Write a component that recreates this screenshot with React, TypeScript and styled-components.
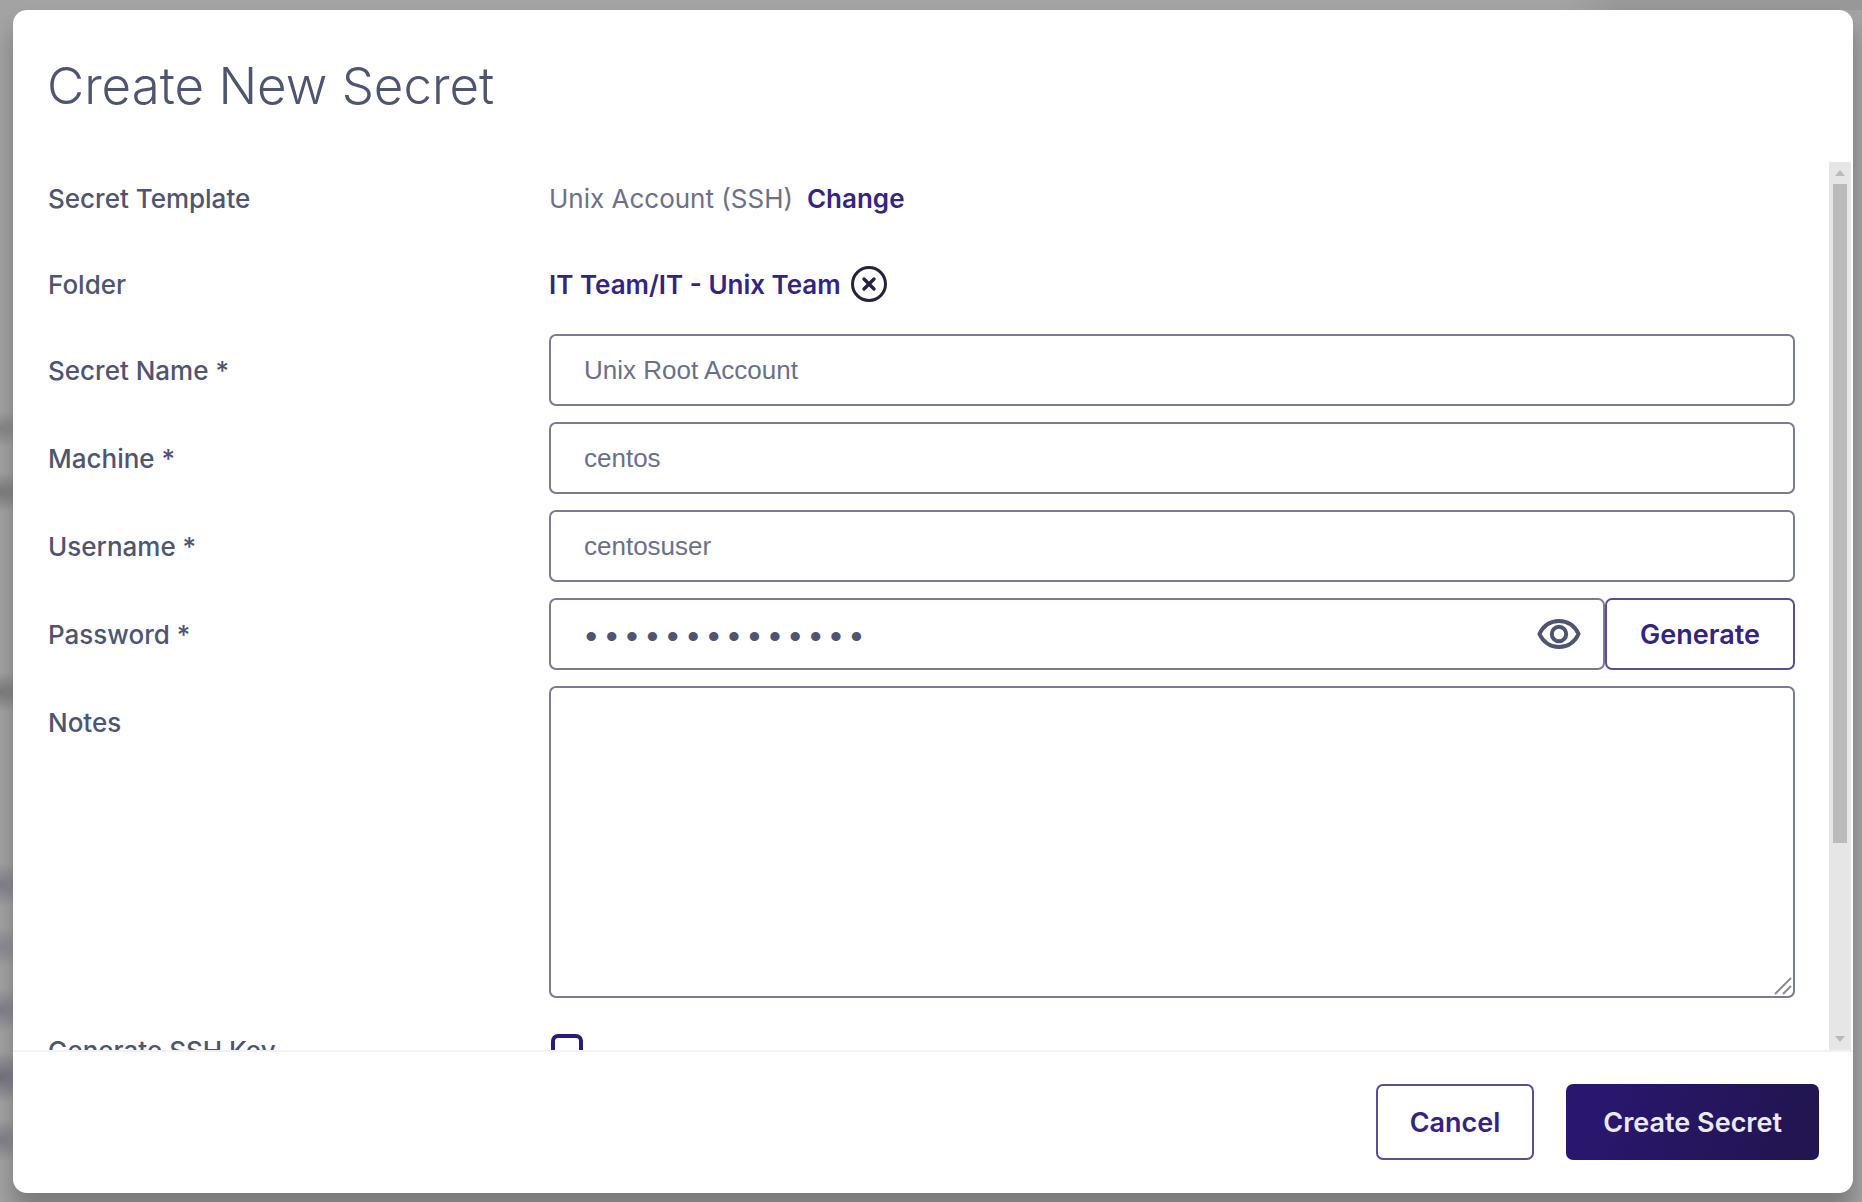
import React, { useCallback, useEffect, useRef, useState } from "react";
import styled, { createGlobalStyle, css } from "styled-components";

const color = {
  text: "#4f5470",
  muted: "#6c7087",
  border: "#7a7c92",
  brand: "#35247f",
  outline: "#5a4d97",
  ink: "#23233a",
};

const GlobalStyle = createGlobalStyle`
  *, *::before, *::after { box-sizing: border-box; }
  body { margin: 0; }
`;

const Backdrop = styled.div`
  display: flex;
  height: 100vh;
  padding: 10px 9px 9px 13px;
  overflow: hidden;
  font-family: Inter, "Liberation Sans", sans-serif;
  color: ${color.text};
  background:
    radial-gradient(ellipse 30px 18px at 0 429px, #7d7d7dcc, transparent),
    radial-gradient(ellipse 30px 20px at 0 492px, #757575dd, transparent),
    radial-gradient(ellipse 30px 20px at 0 692px, #757575dd, transparent),
    radial-gradient(ellipse 30px 22px at 0 885px, #7b7987dd, transparent),
    radial-gradient(ellipse 26px 20px at 0 947px, #83818ecc, transparent),
    radial-gradient(ellipse 30px 22px at 0 1010px, #7b7987dd, transparent),
    radial-gradient(ellipse 32px 26px at 0 1077px, #6e6c7bee, transparent),
    radial-gradient(ellipse 28px 22px at 0 1140px, #7b7987dd, transparent),
    linear-gradient(90deg, transparent 84%, #96989a 87%) 0 0 / 100% 10px no-repeat,
    #a3a3a3;
`;

const Dialog = styled.section`
  flex: 1;
  min-width: 0;
  display: flex;
  flex-direction: column;
  background: #fff;
  border-radius: 14px;
  box-shadow: 0 18px 22px rgba(0, 0, 0, 0.26);
`;

const Header = styled.header`
  padding: 44px 34px;
`;

const Title = styled.h1`
  margin: 0;
  font-size: 51px;
  font-weight: 300;
  line-height: 64px;
`;

const Body = styled.div`
  flex: 1;
  min-height: 0;
  display: flex;
  padding-right: 2px;
`;

const Scroller = styled.div`
  flex: 1;
  min-width: 0;
  overflow-y: auto;
  scrollbar-width: none;
`;

const Form = styled.form`
  display: flex;
  flex-direction: column;
  gap: 16px;
  padding: 0 34px 214px 35px;
`;

const Row = styled.div`
  display: grid;
  grid-template-columns: minmax(160px, 501px) minmax(0, 1fr);
  align-items: start;
`;

const labelText = css`
  padding-top: 4px;
  font-size: 26px;
  font-weight: 500;
  line-height: 66px;
`;

const Label = styled.label`
  ${labelText}
`;

const Caption = styled.span`
  ${labelText}
`;

const Value = styled.div<{ $gap: number }>`
  display: flex;
  align-items: center;
  gap: ${(p) => p.$gap}px;
  height: 70px;
  padding-top: 2px;
  font-size: 26px;
  color: ${color.muted};
`;

const TextLink = styled.a`
  color: ${color.brand};
  font-weight: 600;
  text-decoration: none;
`;

const IconButton = styled.button`
  display: flex;
  padding: 0;
  border: 0;
  background: none;
  color: ${(p) => p.color};
  cursor: pointer;
`;

const fieldBox = css`
  width: 100%;
  border: 2px solid ${color.border};
  border-radius: 7px;
  background: #fff;
  color: ${color.muted};
  font-family: "Liberation Sans", Arial, sans-serif;
  font-size: 26px;
  outline: none;
`;

const Input = styled.input`
  ${fieldBox}
  height: 72px;
  padding: 0 33px;
`;

const PasswordGroup = styled.div`
  display: flex;
`;

const PasswordBox = styled.div`
  ${fieldBox}
  flex: 1;
  min-width: 0;
  display: flex;
  align-items: center;
  height: 72px;
  padding: 0 22px 0 30px;
`;

const PasswordInput = styled.input`
  flex: 1;
  min-width: 0;
  padding: 10px 0 0;
  border: 0;
  outline: none;
  background: none;
  color: ${color.text};
  font-family: "Liberation Mono", monospace;
  font-size: 34px;
`;

const NotesBox = styled.div`
  position: relative;
  display: flex;
`;

const Notes = styled.textarea`
  ${fieldBox}
  height: 312px;
  padding: 18px 32px;
  resize: vertical;

  &::-webkit-resizer {
    display: none;
  }
`;

const Grip = styled.svg`
  position: absolute;
  right: 3px;
  bottom: 3px;
  pointer-events: none;
`;

const CheckRow = styled.div`
  display: flex;
  align-items: center;
  height: 72px;
  padding-left: 2px;
`;

const Checkbox = styled.input`
  appearance: none;
  width: 32px;
  height: 32px;
  margin: 0;
  border: 4px solid #2c1a78;
  border-radius: 7px;
  background: #fff;

  &:checked {
    background: #2c1a78;
  }
`;

const Button = styled.button<{ $primary?: boolean; $compact?: boolean }>`
  height: ${(p) => (p.$compact ? 72 : 76)}px;
  padding: 0 ${(p) => (p.$compact ? 33 : 32)}px;
  border: 2px solid ${color.outline};
  border-radius: 7px;
  background: #fff;
  color: ${color.brand};
  font-family: inherit;
  font-size: 27px;
  font-weight: 600;
  white-space: nowrap;
  cursor: pointer;

  ${(p) =>
    p.$primary &&
    css`
      padding: 0 37px;
      border: 0;
      background: linear-gradient(110deg, #29176f 10%, #221551 90%);
      color: #ebe9f3;
    `}
`;

const Footer = styled.footer`
  display: flex;
  justify-content: flex-end;
  gap: 32px;
  padding: 32px 34px 33px;
  border-top: 2px solid #f2f2f4;
`;

const Scrollbar = styled.div`
  display: flex;
  flex-direction: column;
  width: 22px;
  background: #e6e6e6;
`;

const Arrow = styled.span<{ $up?: boolean }>`
  display: flex;
  justify-content: center;
  align-items: center;
  height: 22px;

  &::before {
    content: "";
    border: 5px solid transparent;
    border-${(p) => (p.$up ? "top" : "bottom")}-width: 0;
    border-${(p) => (p.$up ? "bottom" : "top")}: 6px solid #bababa;
  }
`;

const Track = styled.div`
  flex: 1;
  padding: 0 4px;
`;

const Thumb = styled.div`
  background: #bababa;
`;

function ScrollArea({ children }: { children: React.ReactNode }) {
  const view = useRef<HTMLDivElement>(null);
  const [bar, setBar] = useState({ size: 1, start: 0 });

  const measure = useCallback(() => {
    const el = view.current;
    if (!el) return;
    setBar({
      size: el.clientHeight / el.scrollHeight,
      start: el.scrollTop / el.scrollHeight,
    });
  }, []);

  useEffect(() => {
    measure();
    window.addEventListener("resize", measure);
    return () => window.removeEventListener("resize", measure);
  }, [measure]);

  return (
    <Body>
      <Scroller ref={view} onScroll={measure}>
        {children}
      </Scroller>
      <Scrollbar aria-hidden="true">
        <Arrow $up />
        <Track>
          <div style={{ height: `${bar.start * 100}%` }} />
          <Thumb style={{ height: `${bar.size * 100}%` }} />
        </Track>
        <Arrow />
      </Scrollbar>
    </Body>
  );
}

function ClearIcon() {
  return (
    <svg width="38" height="38" viewBox="0 0 38 38" fill="none" stroke="currentColor" strokeWidth="3">
      <circle cx="19" cy="19" r="16.5" />
      <path d="M14 14l10 10M24 14L14 24" strokeWidth="3.4" strokeLinecap="round" />
    </svg>
  );
}

function EyeIcon() {
  return (
    <svg width="44" height="32" viewBox="0 0 44 32" fill="none" stroke="currentColor" strokeWidth="4">
      <path d="M2.4 16C6.5 7.5 13.5 3 22 3S37.5 7.5 41.6 16C37.5 24.5 30.5 29 22 29S6.5 24.5 2.4 16Z" strokeLinejoin="round" />
      <circle cx="22" cy="16" r="7.2" />
    </svg>
  );
}

const textFields = [
  { id: "secret-name", label: "Secret Name *", value: "Unix Root Account" },
  { id: "machine", label: "Machine *", value: "centos" },
  { id: "username", label: "Username *", value: "centosuser" },
];

export default function App() {
  const [visible, setVisible] = useState(false);

  return (
    <>
      <GlobalStyle />
      <Backdrop>
        <Dialog role="dialog" aria-labelledby="dialog-title">
          <Header>
            <Title id="dialog-title">Create New Secret</Title>
          </Header>
          <ScrollArea>
            <Form id="secret-form" onSubmit={(e) => e.preventDefault()}>
              <Row>
                <Caption>Secret Template</Caption>
                <Value $gap={14}>
                  <span>Unix Account (SSH)</span>
                  <TextLink href="#template">Change</TextLink>
                </Value>
              </Row>
              <Row>
                <Caption>Folder</Caption>
                <Value $gap={9}>
                  <TextLink href="#folder">IT Team/IT - Unix Team</TextLink>
                  <IconButton type="button" color={color.ink} aria-label="Clear folder">
                    <ClearIcon />
                  </IconButton>
                </Value>
              </Row>
              {textFields.map((f) => (
                <Row key={f.id}>
                  <Label htmlFor={f.id}>{f.label}</Label>
                  <Input id={f.id} type="text" defaultValue={f.value} />
                </Row>
              ))}
              <Row>
                <Label htmlFor="password">Password *</Label>
                <PasswordGroup>
                  <PasswordBox>
                    <PasswordInput
                      id="password"
                      type={visible ? "text" : "password"}
                      defaultValue="centos-root-01"
                    />
                    <IconButton
                      type="button"
                      color={color.text}
                      aria-label="Show password"
                      onClick={() => setVisible(!visible)}
                    >
                      <EyeIcon />
                    </IconButton>
                  </PasswordBox>
                  <Button type="button" $compact>
                    Generate
                  </Button>
                </PasswordGroup>
              </Row>
              <Row>
                <Label htmlFor="notes">Notes</Label>
                <NotesBox>
                  <Notes id="notes" />
                  <Grip width="18" height="18" viewBox="0 0 18 18" stroke="#8c8c8c" strokeWidth="2">
                    <path d="M1 17L17 1M9 17L17 9" />
                  </Grip>
                </NotesBox>
              </Row>
              <Row>
                <Label htmlFor="ssh-key">Generate SSH Key</Label>
                <CheckRow>
                  <Checkbox id="ssh-key" type="checkbox" />
                </CheckRow>
              </Row>
            </Form>
          </ScrollArea>
          <Footer>
            <Button type="button">Cancel</Button>
            <Button type="submit" form="secret-form" $primary>
              Create Secret
            </Button>
          </Footer>
        </Dialog>
      </Backdrop>
    </>
  );
}
